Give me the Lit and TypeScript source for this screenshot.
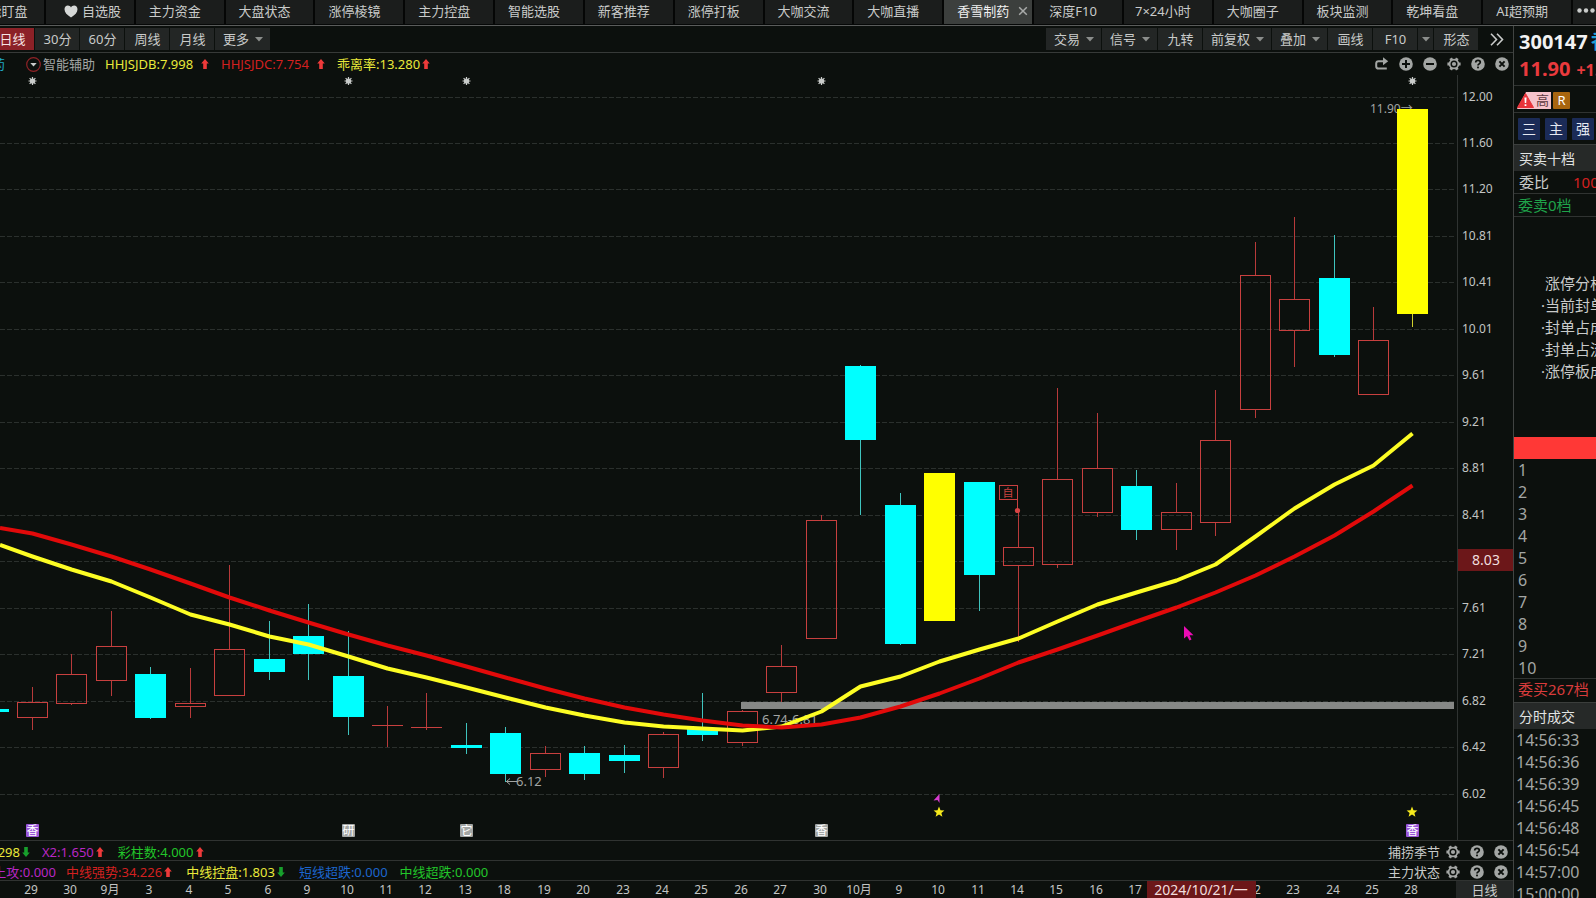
import { LitElement, html, svg, css, nothing } from "lit";
import { customElement, property } from "lit/decorators.js";
import { classMap } from "lit/directives/class-map.js";

const base = css`
  * { box-sizing: border-box; }
  button {
    font: inherit;
    color: inherit;
    background: none;
    border: 0;
    padding: 0;
    margin: 0;
    white-space: nowrap;
    cursor: pointer;
  }
  svg { display: block; flex: none; }
`;

/* ---------- icons ---------- */

const caret = html`<svg width="8" height="5" viewBox="0 0 8 5"><path d="M0 0H8L4 4.6Z" fill="#8b8e8c" /></svg>`;

const trend = (dir: "up" | "down") =>
  dir === "up"
    ? html`<svg width="8" height="10" viewBox="0 0 8 10"><path d="M4 0L7.8 4.6H5.8V10H2.2V4.6H.2Z" fill="#ee3a3a" /></svg>`
    : html`<svg width="8" height="10" viewBox="0 0 8 10"><path d="M4 10L7.8 5.4H5.8V0H2.2V5.4H.2Z" fill="#17a02c" /></svg>`;

const ICONS: Record<string, unknown> = {
  redo: svg`<path d="M9.2 4.2H3.6Q1.2 4.2 1.2 6.6V9.2Q1.2 11.6 3.6 11.6H11.8" fill="none" stroke="#a3a6a4" stroke-width="2"/><path d="M8 .2L13.2 4.2L8 8.2Z" fill="#a3a6a4"/>`,
  plus: svg`<circle cx="7" cy="7" r="6.8" fill="#a3a6a4"/><path d="M7 3V11M3 7H11" stroke="#0c100d" stroke-width="2"/>`,
  minus: svg`<circle cx="7" cy="7" r="6.8" fill="#a3a6a4"/><path d="M3 7H11" stroke="#0c100d" stroke-width="2"/>`,
  gear: svg`<path d="M.4 7H13.6M3.700 1.300L10.300 12.700M10.300 1.300L3.700 12.700" stroke="#a3a6a4" stroke-width="3"/><circle cx="7" cy="7" r="5.3" fill="#a3a6a4"/><circle cx="7" cy="7" r="3.5" fill="#0c100d"/><circle cx="7" cy="7" r="2.1" fill="#a3a6a4"/>`,
  help: svg`<circle cx="7" cy="7" r="6.8" fill="#a3a6a4"/><path d="M4.7 5.5Q4.7 3.4 7 3.4Q9.3 3.4 9.3 5.2Q9.3 6.2 8 6.9Q7 7.4 7 8.6" fill="none" stroke="#0c100d" stroke-width="1.7"/><rect x="6.1" y="9.6" width="1.8" height="1.7" fill="#0c100d"/>`,
  close: svg`<circle cx="7" cy="7" r="6.8" fill="#a3a6a4"/><path d="M4.4 4.4L9.6 9.6M9.6 4.4L4.4 9.6" stroke="#0c100d" stroke-width="2"/>`,
};

const LABELS: Record<string, string> = {
  redo: "重置", plus: "放大", minus: "缩小", gear: "设置", help: "帮助", close: "关闭",
};

@customElement("icon-strip")
class IconStrip extends LitElement {
  @property({ attribute: false }) names: string[] = [];
  static styles = [base, css`
    :host { display: flex; align-items: center; gap: 10px; }
    button { display: block; }
  `];
  render() {
    return this.names.map(
      (n) => html`<button aria-label=${LABELS[n]}><svg width="14" height="14" viewBox="0 0 14 14">${ICONS[n]}</svg></button>`
    );
  }
}

/* ---------- chart data ---------- */

type Kind = "r" | "c" | "y";
/* kind, high, body top, body bottom, low */
const CANDLES: [Kind, number, number, number, number][] = [
  ["r", 687, 702, 718, 730], ["r", 654, 674, 704, 705], ["r", 611, 646, 681, 696],
  ["c", 667, 674, 718, 719], ["r", 668, 703, 707, 718], ["r", 565, 649, 696, 696],
  ["c", 621, 659, 672, 680], ["c", 604, 636, 654, 680], ["c", 631, 676, 717, 735],
  ["r", 706, 725, 726, 747], ["r", 693, 727, 728, 730], ["c", 723, 745, 748, 754],
  ["c", 727, 733, 774, 782], ["r", 746, 753, 770, 777], ["c", 746, 753, 774, 780],
  ["c", 745, 755, 761, 773], ["r", 732, 734, 768, 778], ["c", 693, 728, 735, 741],
  ["r", 710, 711, 743, 746], ["r", 645, 666, 693, 702], ["r", 515, 520, 639, 639],
  ["c", 365, 366, 440, 515], ["c", 493, 505, 644, 645], ["y", 473, 473, 621, 621],
  ["c", 482, 482, 575, 611], ["r", 510, 547, 566, 642], ["r", 388, 479, 565, 568],
  ["r", 413, 468, 513, 517], ["c", 470, 486, 530, 540], ["r", 483, 512, 530, 550],
  ["r", 390, 440, 523, 536], ["r", 242, 275, 410, 418], ["r", 217, 299, 331, 367],
  ["c", 235, 278, 355, 357], ["r", 307, 340, 395, 395], ["y", 109, 109, 314, 327],
];

const FAST = [556, 569, 581, 597, 614, 624, 636, 644, 656, 668, 677, 687, 697, 707, 715, 722, 726, 728, 730, 726, 711, 686, 676, 661, 649, 638, 621, 604, 592, 580, 564, 536, 508, 484, 465, 433];
const SLOW = [533, 544, 556, 569, 583, 597, 610, 622, 634, 645, 655, 666, 677, 688, 698, 707, 714, 720, 725, 727, 724, 717, 706, 693, 678, 662, 649, 635, 621, 607, 592, 575, 556, 535, 511, 485];

const GRID: [number, string][] = [
  [97, "12.00"], [143, "11.60"], [189, "11.20"], [236, "10.81"], [282, "10.41"], [329, "10.01"],
  [375, "9.61"], [422, "9.21"], [468, "8.81"], [515, "8.41"], [561, ""], [608, "7.61"],
  [654, "7.21"], [701, "6.82"], [747, "6.42"], [794, "6.02"],
];

const DAYS = ["29", "30", "9月", "3", "4", "5", "6", "9", "10", "11", "12", "13", "18", "19", "20", "23", "24", "25", "26", "27", "30", "10月", "9", "10", "11", "14", "15", "16", "17", "", "", "22", "23", "24", "25", "28"];

const cx = (i: number) => Math.round(32 + 39.44 * i);
const COLORS: Record<Kind, string> = { r: "#c8403f", c: "#00ffff", y: "#ffff00" };
const WICKS: Record<Kind, string> = { r: "#b83a3a", c: "#3fc4be", y: "#d0d02e" };

@customElement("candle-chart")
class CandleChart extends LitElement {
  static styles = css`
    :host { display: block; }
    svg { display: block; width: 100%; height: auto; }
    text { font-size: 12px; fill: #c3c5c4; }
    .crisp { shape-rendering: crispEdges; }
    .note { font-size: 13px; fill: #a2a5a3; }
    .peak { fill: #a2a5a3; }
    .now { font-size: 14px; fill: #f0dede; text-anchor: middle; }
    .tag { font-size: 12px; fill: #fff; text-anchor: middle; }
    .mine { font-size: 11px; fill: #c8403f; text-anchor: middle; }
  `;

  private candle(i: number, [k, hi, top, bot, lo]: [Kind, number, number, number, number]) {
    const x = cx(i);
    const flat = bot - top <= 1;
    return svg`
      ${hi < top ? svg`<rect x=${x} y=${hi} width="1" height=${top - hi} fill=${WICKS[k]}/>` : nothing}
      ${lo > bot ? svg`<rect x=${x} y=${bot} width="1" height=${lo - bot} fill=${WICKS[k]}/>` : nothing}
      ${k === "r" && !flat
        ? svg`<rect x=${x - 14.5} y=${top + 0.5} width="30" height=${bot - top - 1} fill="none" stroke=${COLORS[k]}/>`
        : svg`<rect x=${x - 15} y=${top} width="31" height=${bot - top} fill=${COLORS[k]}/>`}`;
  }

  private line(ys: number[], start: number) {
    return `0,${start} ` + ys.map((y, i) => `${cx(i) + 0.5},${y + 0.5}`).join(" ");
  }

  private burst(x: number) {
    return svg`<g transform="translate(${x + 0.5} 81)"><circle r="2.6" fill="#c9ccca"/><path d="M0-4V4M-4 0H4M-2.9-2.9L2.9 2.9M2.9-2.9L-2.9 2.9" stroke="#c9ccca" stroke-width="1.2"/></g>`;
  }

  private tag(i: number, t: string, fill: string) {
    return svg`<rect x=${cx(i) - 6} y="824" width="13" height="13" rx="1" fill=${fill}/><text class="tag" x=${cx(i) + 0.5} y="835">${t}</text>`;
  }

  private star(x: number) {
    return svg`<path transform="translate(${x} 812)" d="M0-5.5L1.5-1.8L5.4-1.6L2.4.9L3.4 4.8L0 2.6L-3.4 4.8L-2.4.9L-5.4-1.6L-1.5-1.8Z" fill="#f6ea1c"/>`;
  }

  render() {
    return html`<svg viewBox="0 75 1513 765" role="img" aria-label="香雪制药 日线">
      <g class="crisp">
        ${GRID.map(([y]) => svg`<line x1="0" x2="1454" y1=${y + 0.5} y2=${y + 0.5} stroke="#2b302d" stroke-dasharray="5 2"/>`)}
        <rect x="1457" y="75" width="1" height="765" fill="#2f3331"/>
        <rect x="741" y="702" width="713" height="7" fill="#868886"/>
      </g>
      <text class="note" x="762" y="724">6.74-6.81</text>
      <text class="peak" x="1370" y="113">11.90→</text>
      <g class="crisp">
        ${this.candle(-1, ["c", 709, 709, 712, 712])}
        ${CANDLES.map((c, i) => this.candle(i, c))}
        <path d="M999.5 485.5H1017.5V499.5H999.5ZM1017.5 499.5V510" fill="none" stroke="#c8403f"/>
      </g>
      <circle cx="1017.5" cy="510.5" r="2.6" fill="#d84444"/>
      <text class="mine" x="1008" y="497">自</text>
      <path d="M506 781.5H517M510 778.5L506.500 781.5L510 784.500" fill="none" stroke="#a2a5a3"/>
      <text class="note" x="516" y="786">6.12</text>
      <polyline points=${this.line(FAST, 545)} fill="none" stroke="#fdfd24" stroke-width="4" stroke-linejoin="round"/>
      <polyline points=${this.line(SLOW, 528)} fill="none" stroke="#e20a0a" stroke-width="4" stroke-linejoin="round"/>
      ${[0, 8, 11, 20, 35].map((i) => this.burst(cx(i)))}
      ${this.tag(0, "香", "#9a55d8")}${this.tag(8, "研", "#a3a6a4")}${this.tag(11, "它", "#a3a6a4")}
      ${this.tag(20, "香", "#a3a6a4")}${this.tag(35, "香", "#9a55d8")}
      ${this.star(939)}${this.star(1412)}
      <path d="M939.500 794V803L937.500 800L933.500 800.500Z" fill="#d83bd0"/>
      <path d="M1184 626V638.500L1187 636L1189.500 640.500L1191.500 639.500L1189.500 635.200H1193.500Z" fill="#ec0cb4"/>
      ${GRID.map(([y, t]) => (t ? svg`<text x="1462" y=${y + 4}>${t}</text>` : nothing))}
      <rect x="1458" y="549" width="56" height="22" fill="#6c1719"/>
      <text class="now" x="1486" y="565">8.03</text>
    </svg>`;
  }
}

/* ---------- page ---------- */

const TABS = ["主力资金", "大盘状态", "涨停棱镜", "主力控盘", "智能选股", "新客推荐", "涨停打板", "大咖交流", "大咖直播", "香雪制药", "深度F10", "7×24小时", "大咖圈子", "板块监测", "乾坤看盘", "AI超预期"];
const TOOLS: [string, boolean][] = [["交易", true], ["信号", true], ["九转", false], ["前复权", true], ["叠加", true], ["画线", false], ["F10", false], ["", true], ["形态", false]];
const TIMES = ["14:56:33", "14:56:36", "14:56:39", "14:56:45", "14:56:48", "14:56:54", "14:57:00", "15:00:00"];

@customElement("app-root")
class AppRoot extends LitElement {
  static styles = [base, css`
    :host {
      display: flex;
      flex-direction: column;
      height: 100vh;
      overflow: hidden;
      background: #0c100d;
      color: #c9cbca;
      font: 13px/18px "Noto Sans", "Noto Sans CJK SC", sans-serif;
      white-space: nowrap;
    }
    .cut { display: flex; justify-content: flex-end; overflow: hidden; flex: none; }

    .tabs { display: flex; flex: none; height: 26px; border-bottom: 1px solid #5a5c5b; background: #060807; overflow: hidden; }
    .tab { flex: 1 1 90px; min-width: 0; height: 24px; padding: 0 10px 2px 0; border-right: 2px solid #050605; background: #1b1d1c; display: flex; align-items: center; justify-content: center; }
    .tab.fixed { padding-right: 0; padding-left: 5px; gap: 4px; }
    .first { width: 46px; }
    .first .tab { flex: 0 0 90px; padding-left: 3px; }
    .tab.on { background: #3c3f3d; color: #f1f1f1; padding: 0 4px 2px 13px; justify-content: space-between; }
    .dots { flex: 0 0 23px; background: #1b1d1c; height: 24px; padding: 0 0 4px 4px; display: flex; align-items: center; }

    .body { display: flex; flex: 1; min-height: 0; }
    .main { flex: 1; min-width: 0; }
    .tools { display: flex; height: 27px; padding: 2px 9px 2px 0; border-bottom: 1px solid #373a38; gap: 1px; }
    .tool { height: 22px; min-width: 44px; background: #232625; display: flex; align-items: center; justify-content: center; gap: 6px; padding: 0 7px 0 8px; }
    .tool.mini { min-width: 15px; padding: 0 3px; }
    .tool.on { background: #8c2127; color: #f6e4e4; }
    .now { width: 34px; }
    .space { flex: 1; }
    .more { padding-left: 11px; }

    .info { display: flex; align-items: center; height: 22px; padding-right: 4px; }
    .name { width: 5px; color: #1fa9c4; margin-right: 21px; }
    .assist { display: flex; align-items: center; gap: 2px; color: #a3a6a4; margin-right: 10px; }
    .item { display: flex; align-items: center; gap: 2px; margin-right: 14px; }
    .item.wide { min-width: 104px; justify-content: space-between; margin-right: 12px; }
    .yellow { color: #e9e93a; }
    .red { color: #d32020; }
    .purple { color: #b827c4; }
    .green { color: #22c62a; }
    .blue { color: #1c66cf; }

    .sub { display: flex; align-items: center; height: 20px; border-top: 1px solid #303331; padding: 2px 5px 0 0; }
    .sub .plain { margin-right: 12px; }
    .cut .item { margin-right: 0; }
    .w30 { width: 30px; margin-right: 12px; }
    .w56 { width: 56px; margin-right: 10px; }
    .sub icon-strip { margin-left: 6px; }

    .dates { display: flex; height: 18px; border-top: 1px solid #303331; }
    .dates svg { flex: 1; min-width: 0; height: 17px; }
    .dates text { font-size: 12px; fill: #c3c5c4; text-anchor: middle; }
    .dates .pick { font-size: 14px; fill: #f0dede; }
    .period { flex: 0 0 57px; background: #242726; text-align: center; }

    .side { flex: 0 0 83px; border-left: 1px solid #414442; overflow: hidden; font-size: 15px; line-height: 22px; }
    .quote { height: 60px; padding: 2px 0 0 5px; border-bottom: 1px solid #303331; font-weight: 700; font-size: 20px; line-height: 27px; }
    .code { color: #f2f2f2; }
    .code span { color: #1f9fd8; margin-left: 3px; }
    .price { color: #e93a3d; }
    .price small { font-size: 16px; margin-left: 6px; }
    .badges { display: flex; align-items: center; gap: 2px; height: 27px; padding: 2px 0 0 3px; border-bottom: 1px solid #303331; }
    .risk { display: flex; height: 17px; }
    .risk span { background: #f6c3cb; color: #5d3a3f; font-size: 13px; line-height: 16px; width: 17px; text-align: center; }
    .r { width: 17px; height: 17px; border-radius: 1px; background: #a8650f; color: #fff; font-size: 13px; line-height: 17px; text-align: center; }
    .marks { display: flex; gap: 5px; height: 31px; padding: 5px 0 0 4px; }
    .mark { flex: none; width: 22px; height: 22px; background: #1b2b57; color: #e6e9f2; font-size: 14px; line-height: 22px; border-radius: 1px; }
    h2 { margin: 0; height: 27px; padding: 1px 0 0 5px; background: #262928; border-top: 1px solid #3b3e3c; color: #e2e4e3; font-size: 14px; font-weight: 400; line-height: 26px; }
    .row { height: 23px; padding-left: 4px; border-bottom: 1px solid #303331; }
    .ratio { display: flex; gap: 24px; padding-left: 5px; }
    .sell { color: #1fa34a; }
    .buy { color: #d83c3c; height: 24px; border-top: 1px solid #303331; border-bottom: 0; line-height: 21px; }
    .limit { padding: 55px 0 55px 27px; }
    .limit p { margin: 0; padding-left: 4px; }
    .limit li { list-style: none; }
    ul { margin: 0; padding: 0; }
    .bar { height: 22px; background: #ff3836; }
    ol { list-style: none; margin: 0; padding: 0 0 0 4px; font-size: 16px; color: #a3a6a4; }
    .levels { height: 219px; }
    .times { padding-left: 2px; }
  `];

  private item(text: string, color: string, dir?: "up" | "down", extra = "") {
    return html`<span class="item ${color} ${extra} ${dir ? "" : "plain"}">${text}${dir ? trend(dir) : nothing}</span>`;
  }

  render() {
    const strip = ["gear", "help", "close"];
    return html`
      <nav class="tabs">
        <div class="cut first"><button class="tab fixed">智能盯盘</button></div>
        <button class="tab fixed">
          <svg width="14" height="13" viewBox="0 0 14 13"><path d="M7 12.500C3 10 .5 7.600.5 4.300C.5 2 2 .6 3.900.6C5.300.6 6.400 1.300 7 2.400C7.600 1.300 8.700.6 10.100.6C12 .6 13.500 2 13.500 4.300C13.500 7.600 11 10 7 12.500Z" fill="#d6d8d7"/></svg>自选股</button>
        ${TABS.map((t) => html`<button class=${classMap({ tab: true, on: t === "香雪制药" })}>${t}${t === "香雪制药"
          ? html`<svg width="10" height="10" viewBox="0 0 10 10"><path d="M1.200 1.200L8.800 8.800M8.800 1.200L1.200 8.800" stroke="#a9abaa" stroke-width="1.500"/></svg>` : nothing}</button>`)}
        <button class="dots" aria-label="更多"><svg width="19" height="5" viewBox="0 0 19 5"><circle cx="2.500" cy="2.500" r="2.200" fill="#c9cbca"/><circle cx="9" cy="2.500" r="2.200" fill="#c9cbca"/><circle cx="15.500" cy="2.500" r="2.200" fill="#c9cbca"/></svg></button>
      </nav>
      <div class="body">
        <main class="main">
          <div class="tools">
            <div class="cut now"><button class="tool on">日线</button></div>
            ${["30分", "60分", "周线", "月线"].map((t) => html`<button class="tool">${t}</button>`)}
            <button class="tool" aria-haspopup="menu">更多${caret}</button>
            <span class="space"></span>
            ${TOOLS.map(([t, menu]) => html`<button class=${classMap({ tool: true, mini: !t })} aria-label=${t || "F10 菜单"}>${t}${menu ? caret : nothing}</button>`)}
            <button class="more" aria-label="展开"><svg width="14" height="13" viewBox="0 0 14 13"><path d="M1 .8L6.500 6.500L1 12.200M7 .8L12.500 6.500L7 12.200" fill="none" stroke="#c9cbca" stroke-width="1.600"/></svg></button>
          </div>
          <div class="info">
            <span class="cut name">香雪制药</span>
            <button class="assist"><svg width="15" height="15" viewBox="0 0 15 15"><circle cx="7.500" cy="7.500" r="6.800" fill="none" stroke="#8f2226" stroke-width="1.200"/><path d="M4.300 6H10.700L7.500 9.500Z" fill="#c9cbca"/></svg>智能辅助</button>
            ${this.item("HHJSJDB:7.998", "yellow", "up", "wide")}
            ${this.item("HHJSJDC:7.754", "red", "up", "wide")}
            ${this.item("乖离率:13.280", "yellow", "up")}
            <span class="space"></span>
            <icon-strip .names=${["redo", "plus", "minus", ...strip]}></icon-strip>
          </div>
          <candle-chart></candle-chart>
          <div class="sub">
            <span class="cut w30">${this.item("X1:0.298", "yellow", "down")}</span>
            ${this.item("X2:1.650", "purple", "up")}
            ${this.item("彩柱数:4.000", "green", "up")}
            <span class="space"></span><span>捕捞季节</span><icon-strip .names=${strip}></icon-strip>
          </div>
          <div class="sub">
            <span class="cut w56 purple">短线上攻:0.000</span>
            ${this.item("中线强势:34.226", "red", "up")}
            ${this.item("中线控盘:1.803", "yellow", "down")}
            ${this.item("短线超跌:0.000", "blue")}
            ${this.item("中线超跌:0.000", "green")}
            <span class="space"></span><span>主力状态</span><icon-strip .names=${strip}></icon-strip>
          </div>
          <div class="dates">
            <svg viewBox="0 0 1456 17" preserveAspectRatio="xMinYMin meet">
              ${DAYS.map((d, i) => (d ? svg`<text x=${cx(i) - 1} y="13">${d}</text>` : nothing))}
              <rect x="1147" y="0" width="109" height="17" fill="#6c1719"/>
              <text class="pick" x="1201" y="14">2024/10/21/一</text>
            </svg>
            <button class="period">日线</button>
          </div>
        </main>
        <aside class="side">
          <div class="quote">
            <div class="code">300147<span>香雪制药</span></div>
            <div class="price">11.90<small>+1.98</small></div>
          </div>
          <div class="badges">
            <span class="risk"><svg width="17" height="17" viewBox="0 0 17 17"><path d="M9 0H17V17H0Z" fill="#f6c3cb"/><path d="M8.500 1.500L16.500 15.500H.5Z" fill="#e8333a" stroke="#e8333a" stroke-linejoin="round"/><path d="M7.400 5.500H9.600L9.200 11H7.800ZM7.600 12.200H9.400V14H7.600Z" fill="#fff"/></svg><span>高</span></span>
            <span class="r">R</span>
          </div>
          <div class="marks">${["三", "主", "强"].map((t) => html`<button class="mark">${t}</button>`)}</div>
          <h2>买卖十档</h2>
          <div class="row ratio"><span>委比</span><span class="red">100.00%</span></div>
          <div class="row sell">委卖0档</div>
          <div class="limit">
            <p>涨停分析</p>
            <ul>${["当前封单", "封单占成交", "封单占流通", "涨停板成交"].map((t) => html`<li>·${t}</li>`)}</ul>
          </div>
          <div class="bar"></div>
          <ol class="levels">${[1, 2, 3, 4, 5, 6, 7, 8, 9, 10].map((n) => html`<li>${n}</li>`)}</ol>
          <div class="row buy">委买267档</div>
          <h2>分时成交</h2>
          <ol class="times">${TIMES.map((t) => html`<li>${t}</li>`)}</ol>
        </aside>
      </div>`;
  }
}
